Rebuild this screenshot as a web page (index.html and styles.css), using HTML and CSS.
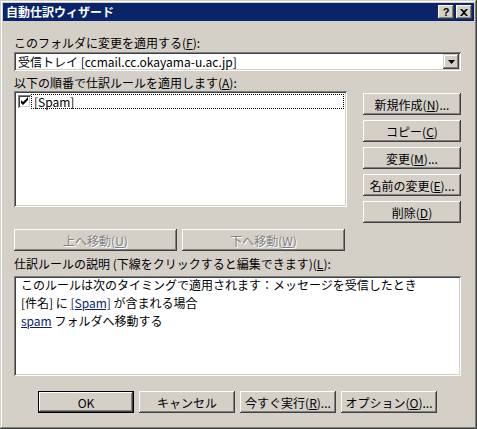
FILE: index.html
```html
<!DOCTYPE html>
<html lang="ja">
<head>
    <meta charset="UTF-8">
    <title>自動仕訳ウィザード</title>
    <link rel="stylesheet" href="styles.css">
</head>
<body>

<div class="window">
    <div class="titlebar">
        <span class="title">自動仕訳ウィザード</span>
        <div class="title-buttons">
            <span class="tbtn">?</span>
            <span class="tbtn close">
                <svg width="8" height="7" viewBox="0 0 8 7"><path d="M0 0h2l2 2 2-2h2L5 3.5 8 7H6L4 5 2 7H0l3-3.5z" fill="#000"/></svg>
            </span>
        </div>
    </div>

    <div class="content">
        <div class="label">このフォルダに変更を適用する(<u>F</u>):</div>
        <div class="combo">
            <span class="combo-text">受信トレイ [ccmail.cc.okayama-u.ac.jp]</span>
            <span class="combo-btn">
                <svg width="7" height="4" viewBox="0 0 7 4"><path d="M0 0h7L3.5 4z" fill="#000"/></svg>
            </span>
        </div>

        <div class="label label-rules">以下の順番で仕訳ルールを適用します(<u>A</u>):</div>
        <div class="rules-row">
            <div class="listbox">
                <div class="list-item">
                    <span class="check">
                        <svg width="9" height="9" viewBox="0 0 9 9"><path d="M1 3l2 2 5-5v3L3 8 1 6z" fill="#000"/></svg>
                    </span>
                    <span class="item-text">[Spam]</span>
                </div>
            </div>
            <div class="side-buttons">
                <button class="btn">新規作成(<u>N</u>)...</button>
                <button class="btn">コピー(<u>C</u>)</button>
                <button class="btn">変更(<u>M</u>)...</button>
                <button class="btn">名前の変更(<u>E</u>)...</button>
                <button class="btn">削除(<u>D</u>)</button>
            </div>
        </div>

        <div class="move-row">
            <button class="btn btn-move" disabled>上へ移動(<u>U</u>)</button>
            <button class="btn btn-move" disabled>下へ移動(<u>W</u>)</button>
        </div>

        <div class="label label-desc">仕訳ルールの説明 (下線をクリックすると編集できます)(<u>L</u>):</div>
        <div class="desc">
            <div>このルールは次のタイミングで適用されます：メッセージを受信したとき</div>
            <div>[件名] に <a href="#">[Spam]</a> が含まれる場合</div>
            <div><a href="#">spam</a> フォルダへ移動する</div>
        </div>

        <div class="footer">
            <button class="btn btn-default">OK</button>
            <button class="btn">キャンセル</button>
            <button class="btn">今すぐ実行(<u>R</u>)...</button>
            <button class="btn">オプション(<u>O</u>)...</button>
        </div>
    </div>
</div>

</body>
</html>
```

FILE: styles.css
```css
* {
    margin: 0;
    padding: 0;
    box-sizing: border-box;
}
body {
    font-family: "Noto Sans CJK JP", "Liberation Sans", sans-serif;
    font-size: 12px;
    color: #000;
    background-color: #d4d0c8;
}
.window {
    width: 477px;
    height: 429px;
    padding: 3px;
    background-color: #d4d0c8;
    box-shadow: inset -1px -1px #404040, inset 1px 1px #d4d0c8,
                inset -2px -2px #808080, inset 2px 2px #fff;
}
.titlebar {
    height: 18px;
    background-color: #0a246a;
    color: #fff;
    display: flex;
    justify-content: space-between;
    align-items: center;
    padding: 0 2px 0 3px;
}
.title {
    font-weight: bold;
    line-height: 18px;
}
.title-buttons {
    display: flex;
    gap: 2px;
}
.tbtn {
    width: 16px;
    height: 14px;
    background-color: #d4d0c8;
    color: #000;
    font-family: "Liberation Sans", sans-serif;
    font-weight: bold;
    font-size: 11px;
    line-height: 14px;
    text-align: center;
    display: flex;
    justify-content: center;
    align-items: center;
    box-shadow: inset -1px -1px #404040, inset 1px 1px #fff,
                inset -2px -2px #808080;
}
.content {
    padding: 14px 13px 0 11px;
}
.label {
    line-height: 15px;
    height: 15px;
}
.combo {
    margin-top: 2px;
    height: 19px;
    background-color: #fff;
    display: flex;
    align-items: center;
    justify-content: space-between;
    padding: 0 2px 0 4px;
    box-shadow: inset 1px 1px #808080, inset -1px -1px #fff,
                inset 2px 2px #404040, inset -2px -2px #d4d0c8;
}
.combo-text {
    line-height: 15px;
}
.combo-btn {
    width: 16px;
    height: 15px;
    background-color: #d4d0c8;
    display: flex;
    justify-content: center;
    align-items: center;
    box-shadow: inset -1px -1px #404040, inset 1px 1px #d4d0c8,
                inset -2px -2px #808080, inset 2px 2px #fff;
}
.label-rules {
    margin-top: 4px;
}
.rules-row {
    margin-top: 1px;
    display: flex;
    justify-content: space-between;
    align-items: flex-start;
}
.listbox {
    width: 333px;
    height: 116px;
    background-color: #fff;
    padding: 3px 3px 0 4px;
    box-shadow: inset 1px 1px #808080, inset -1px -1px #fff,
                inset 2px 2px #404040, inset -2px -2px #d4d0c8;
}
.list-item {
    display: flex;
    align-items: center;
    height: 15px;
}
.check {
    width: 13px;
    height: 13px;
    background-color: #fff;
    display: flex;
    justify-content: center;
    align-items: center;
    box-shadow: inset 1px 1px #808080, inset -1px -1px #fff,
                inset 2px 2px #404040, inset -2px -2px #d4d0c8;
}
.item-text {
    flex: 1;
    height: 15px;
    line-height: 13px;
    padding-left: 2px;
    border: 1px dotted #000;
}
.side-buttons {
    margin-top: 2px;
    width: 98px;
    display: flex;
    flex-direction: column;
    gap: 5px;
}
.btn {
    height: 22px;
    background-color: #d4d0c8;
    border: none;
    font-family: inherit;
    font-size: 12px;
    color: #000;
    box-shadow: inset -1px -1px #404040, inset 1px 1px #fff,
                inset -2px -2px #808080, inset 2px 2px #d4d0c8;
}
.btn:disabled {
    color: #808080;
    text-shadow: 1px 1px #fff;
}
.move-row {
    margin-top: 6px;
    display: flex;
    gap: 5px;
}
.btn-move {
    width: 163px;
}
.label-desc {
    margin-top: 5px;
}
.desc {
    margin-top: 5px;
    height: 100px;
    background-color: #fff;
    padding: 0 4px 0 7px;
    line-height: 18px;
    box-shadow: inset 1px 1px #808080, inset -1px -1px #fff,
                inset 2px 2px #404040, inset -2px -2px #d4d0c8;
}
.desc a {
    color: #0a246a;
    text-decoration: underline;
}
.footer {
    margin-top: 15px;
    display: flex;
    justify-content: center;
    gap: 5px;
}
.footer .btn {
    width: 96px;
}
.btn-default {
    box-shadow: inset 0 0 0 1px #000, inset -2px -2px #404040, inset 2px 2px #fff,
                inset -3px -3px #808080;
}
```
